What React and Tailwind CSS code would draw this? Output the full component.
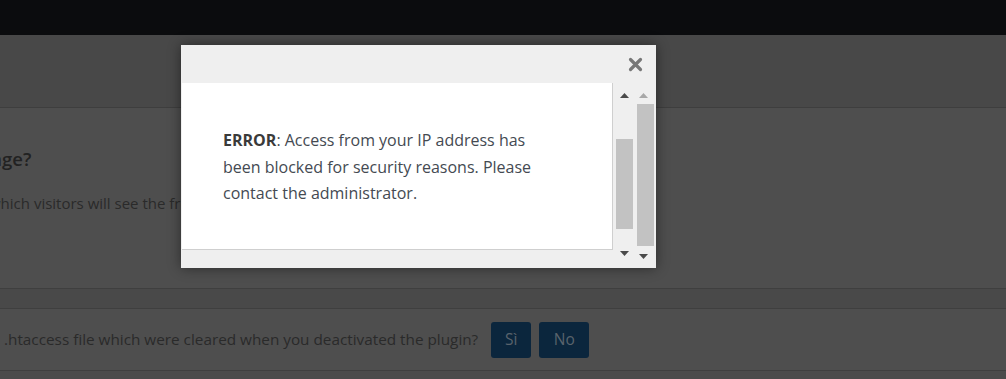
import React from 'react';

function Arrow({ dir, color }) {
  return (
    <svg width="9" height="5" viewBox="0 0 9 5" className="block">
      {dir === 'up' ? (
        <polygon points="4.5,0 9,5 0,5" fill={color} />
      ) : (
        <polygon points="0,0 9,0 4.5,5" fill={color} />
      )}
    </svg>
  );
}

function ErrorModal() {
  return (
    <div className="absolute left-[181px] top-[45px] w-[475px] h-[223px] bg-[#efefef] shadow-[0_0_12px_rgba(0,0,0,0.45)] flex flex-col">
      <div className="h-[38px] flex justify-end items-start pr-[13px] pt-[12px]">
        <svg width="15" height="15" viewBox="0 0 15 15">
          <path d="M2.5 2.5 L12.5 12.5 M12.5 2.5 L2.5 12.5" stroke="#777" strokeWidth="3.2" strokeLinecap="round" />
        </svg>
      </div>
      <div className="flex h-[167px]">
        <div className="ml-[1px] w-[431px] h-[167px] bg-white border-r border-b border-[#cfcfcf] pl-[41px] pt-[44px]">
          <p className="w-[330px] text-[16px] leading-[26.5px] text-[#444a52] font-['Open_Sans',sans-serif]">
            <strong className="font-bold text-[#3a3a3a]">ERROR</strong>: Access from your IP address has been blocked for security reasons. Please contact the administrator.
          </p>
        </div>
        <div className="w-[21px] relative">
          <div className="absolute left-[7px] top-[10px]"><Arrow dir="up" color="#4a4a4a" /></div>
          <div className="absolute left-[3px] top-[56px] w-[17px] h-[90px] bg-[#c2c2c2]" />
          <div className="absolute left-[7px] top-[168px]"><Arrow dir="down" color="#4a4a4a" /></div>
        </div>
        <div className="w-[21px] relative">
          <div className="absolute left-[5px] top-[10px]"><Arrow dir="up" color="#a8a8a8" /></div>
          <div className="absolute left-[3px] top-[21px] w-[17px] h-[142px] bg-[#c2c2c2]" />
          <div className="absolute left-[5px] top-[171px]"><Arrow dir="down" color="#4a4a4a" /></div>
        </div>
      </div>
    </div>
  );
}

export default function App() {
  return (
    <div className="relative w-[1006px] h-[379px] overflow-hidden bg-[#4e4e4e] font-['Open_Sans',sans-serif]">
      <div className="h-[35px] bg-[#0b0c0e]" />
      <div className="h-[73px] bg-[#484848] border-b border-[#3e3e3e]" />
      <div className="h-[181px] border-b border-[#3f3f3f] pt-[38px]">
        <h2 className="ml-[-20px] text-[18.5px] font-semibold text-[#222] leading-[26px]">Page?</h2>
        <p className="mt-[20px] ml-[-11px] text-[15px] text-[#2a2a2a] whitespace-nowrap">which visitors will see the front-end of your website</p>
      </div>
      <div className="h-[20px] bg-[#494949] border-b border-[#3f3f3f]" />
      <div className="h-[62px] border-b border-[#3f3f3f] flex items-center gap-[8px] pl-[4px]">
        <span className="text-[15.3px] text-[#2a2a2a] whitespace-nowrap mr-[5px]">.htaccess file which were cleared when you deactivated the plugin?</span>
        <button className="w-[40px] h-[36px] rounded-[3px] bg-[#0b263d] text-[15.5px] text-[#59636c]">Sì</button>
        <button className="w-[50px] h-[36px] rounded-[3px] bg-[#0b263d] text-[15.5px] text-[#59636c]">No</button>
      </div>
      <div className="h-[8px] bg-[#4b4b4b]" />
      <ErrorModal />
    </div>
  );
}
